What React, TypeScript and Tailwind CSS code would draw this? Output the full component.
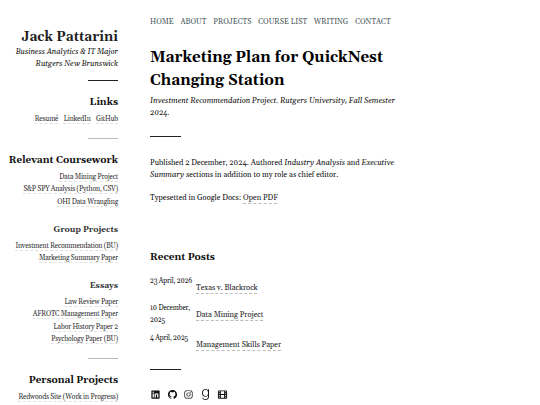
import React from 'react';
import { BiLogoLinkedinSquare, BiLogoGithub, BiLogoInstagram } from 'react-icons/bi';
import { FaGoodreadsG } from 'react-icons/fa';

const navItems = ['HOME', 'ABOUT', 'PROJECTS', 'COURSE LIST', 'WRITING', 'CONTACT'];

const posts = [
  { date: '23 April, 2026', title: 'Texas v. Blackrock', row: 'h-[27px]' },
  { date: '10 December, 2025', title: 'Data Mining Project', row: 'h-[30px]' },
  { date: '4 April, 2025', title: 'Management Skills Paper', row: 'h-[27px]' },
];

const sideLink = 'underline decoration-dashed decoration-1 decoration-[#e2e2e2] underline-offset-[2px]';
const mainLink = 'text-[#222] underline decoration-dashed decoration-1 decoration-[#bbb] underline-offset-[3px]';

const SideLinks: React.FC<{ items: string[] }> = ({ items }) => (
  <ul className="text-[6.9px] leading-[12.5px] tracking-[-0.15px] text-[#333]">
    {items.map((item) => (
      <li key={item}>
        <a href="#" className={sideLink}>{item}</a>
      </li>
    ))}
  </ul>
);

const FilmIcon: React.FC = () => (
  <svg viewBox="0 0 24 24" className="size-[11px]">
    <path
      fill="currentColor"
      fillRule="evenodd"
      d="M4 3h16a2 2 0 0 1 2 2v14a2 2 0 0 1-2 2H4a2 2 0 0 1-2-2V5a2 2 0 0 1 2-2zM8.500 5v6h7V5zM8.500 13v6h7v-6zM4 5v2h2V5zM4 9v2h2V9zM4 13v2h2v-2zM4 17v2h2v-2zM18 5v2h2V5zM18 9v2h2V9zM18 13v2h2v-2zM18 17v2h2v-2z"
    />
  </svg>
);

const App: React.FC = () => {
  return (
    <div className="flex h-[405px] overflow-hidden bg-white font-[Gelasio,Georgia,'Liberation_Serif',serif] text-[#111]">
      <aside className="w-[118px] shrink-0 whitespace-nowrap pt-7 text-right flex flex-col items-end">
        <h1 className="text-[13.4px] leading-[19px] font-bold text-[#222]">Jack Pattarini</h1>
        <p className="text-[7.55px] leading-[11.5px] italic">
          Business Analytics &amp; IT Major
          <br />
          Rutgers New Brunswick
        </p>
        <hr className="mt-[10px] w-[30px] border-[#222]" />
        <h2 className="mt-[13px] text-[9.9px] leading-4 font-bold">Links</h2>
        <div className="mt-[3px] flex gap-[5.5px] text-[6.9px] leading-[12.5px] tracking-[-0.15px] text-[#333]">
          <a href="#" className={sideLink}>Resumé</a>
          <a href="#" className={sideLink}>LinkedIn</a>
          <a href="#" className={sideLink}>GitHub</a>
        </div>
        <hr className="mt-3 w-[30px] border-[#bbb]" />
        <h2 className="mt-[13px] mb-[3px] text-[9.9px] leading-4 font-bold">Relevant Coursework</h2>
        <SideLinks items={['Data Mining Project', 'S&P SPY Analysis (Python, CSV)', 'OHI Data Wrangling']} />
        <h3 className="mt-4 mb-[3.5px] text-[8.3px] leading-3 font-bold text-[#333]">Group Projects</h3>
        <SideLinks items={['Investment Recommendation (BU)', 'Marketing Summary Paper']} />
        <h3 className="mt-[15.5px] mb-[3.5px] text-[8.3px] leading-3 font-bold text-[#333]">Essays</h3>
        <SideLinks items={['Law Review Paper', 'AFROTC Management Paper', 'Labor History Paper 2', 'Psychology Paper (BU)']} />
        <hr className="mt-3 w-[30px] border-[#bbb]" />
        <h2 className="mt-[13px] mb-[3px] text-[9.9px] leading-4 font-bold">Personal Projects</h2>
        <SideLinks items={['Redwoods Site (Work in Progress)']} />
      </aside>

      <main className="ml-8 w-[260px] pt-4 whitespace-nowrap">
        <nav className="flex gap-[6.8px] text-[7.55px] leading-3 text-[#4b5a60]">
          {navItems.map((item) => (
            <a key={item} href="#">{item}</a>
          ))}
        </nav>
        <h1 className="mt-[18px] text-[15.2px] leading-[23px] font-bold text-black">
          Marketing Plan for QuickNest
          <br />
          Changing Station
        </h1>
        <p className="mt-[3px] text-[7.6px] leading-3 italic">
          Investment Recommendation Project. Rutgers University, Fall Semester
          <br />
          2024.
        </p>
        <hr className="mt-[17px] w-[31px] border-[#222]" />
        <p className="mt-[21px] text-[7.6px] leading-[11.5px]">
          Published 2 December, 2024. Authored <em>Industry Analysis</em> and <em>Executive</em>
          <br />
          <em>Summary</em> sections in addition to my role as chief editor.
        </p>
        <p className="mt-[11px] text-[7.6px] leading-3">
          Typesetted in Google Docs: <a href="#" className={mainLink}>Open PDF</a>
        </p>
        <h2 className="mt-[45px] text-[9.9px] leading-4 font-bold">Recent Posts</h2>
        <ul className="mt-[10px] text-[7.55px] leading-3">
          {posts.map((post) => (
            <li key={post.title} className={`flex ${post.row}`}>
              <time className="w-[46px] whitespace-normal text-[6.9px] tracking-[-0.15px]">{post.date}</time>
              <span className="pt-[7px]">
                <a href="#" className={mainLink}>{post.title}</a>
              </span>
            </li>
          ))}
        </ul>
        <hr className="mt-[10px] w-[31px] border-[#222]" />
        <div className="mt-[19px] flex gap-[5.7px] text-[11px]">
          <BiLogoLinkedinSquare />
          <BiLogoGithub />
          <BiLogoInstagram />
          <FaGoodreadsG />
          <FilmIcon />
        </div>
      </main>
    </div>
  );
};

export default App;
